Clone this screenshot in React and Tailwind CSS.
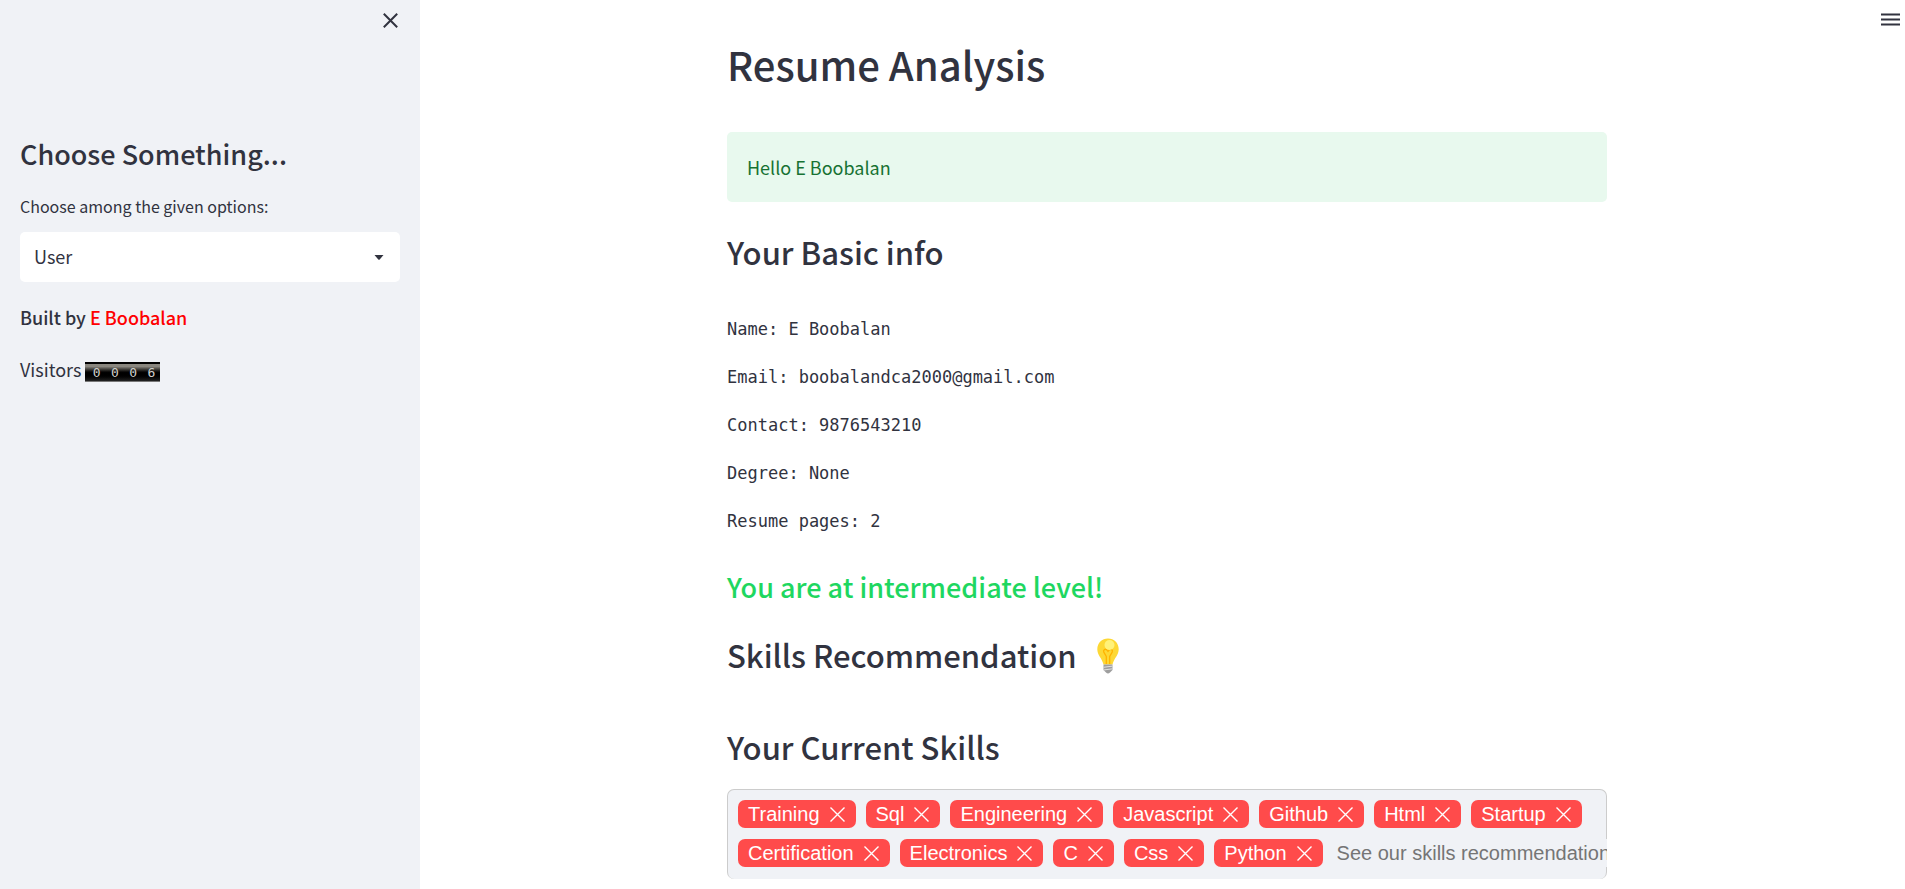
import React from "react";

const INFO = [
  "Name: E Boobalan",
  "Email: boobalandca2000@gmail.com",
  "Contact: 9876543210",
  "Degree: None",
  "Resume pages: 2",
];

const SKILLS = [
  "Training",
  "Sql",
  "Engineering",
  "Javascript",
  "Github",
  "Html",
  "Startup",
  "Certification",
  "Electronics",
  "C",
  "Css",
  "Python",
];

function BulbIcon() {
  return (
    <svg className="mt-0.5" width="22" height="36" viewBox="0 0 22 36" aria-hidden="true">
      <path
        d="M11 0.5C4.900 0.500 0.300 5 0.300 11.200c0 6 4.600 8.600 6.200 15.300h9c1.600-6.700 6.200-9.300 6.200-15.300C21.700 5 17.100 0.500 11 0.500z"
        fill="#fdd835"
      />
      <path
        d="M9.300 26V18.500L6.800 14.200c-1-2.300 1.600-4 3.200-2l1 1.300 1-1.300c1.600-2 4.200-.3 3.200 2L12.700 18.500V26"
        fill="none"
        stroke="#ffb300"
        strokeWidth="1.300"
      />
      <circle cx="12.500" cy="7" r="5" fill="#fff27a" />
      <path d="M6.500 26.500h9v5.500l-2.500 2.500a3 3 0 0 1-4 0L6.500 32z" fill="#9e9e9e" />
      <path d="M6.500 29.300l9-1.200M6.500 32l9-1.200" stroke="#e0e0e0" strokeWidth="1" />
    </svg>
  );
}

function SkillTag({ name }) {
  return (
    <li className="flex h-7 items-center gap-2.5 rounded-[7px] bg-[#ff4b4b] pr-[11px] pl-2.5 font-['Liberation_Sans',Arial,sans-serif] text-[20px] leading-7 text-white">
      {name}
      <button type="button" aria-label={`Remove ${name}`} className="block">
        <svg width="15" height="15" viewBox="0 0 15 15" fill="none" stroke="currentColor" strokeWidth="1.400">
          <path d="M0.500 0.500l14 14M14.500 0.500l-14 14" />
        </svg>
      </button>
    </li>
  );
}

function Sidebar() {
  return (
    <aside className="w-[420px] shrink-0 bg-[#f0f2f6] px-5">
      <div className="flex h-[136px] items-start justify-end pt-[13px] pr-0.5">
        <button type="button" aria-label="Close sidebar" className="block">
          <svg width="15" height="15" viewBox="0 0 15 15" fill="none" stroke="#31333f" strokeWidth="2">
            <path d="M0.800 0.800l13.400 13.400M14.200 0.800L0.800 14.200" />
          </svg>
        </button>
      </div>
      <h2 className="text-[27px] leading-9 font-medium">Choose Something...</h2>
      <label htmlFor="role" className="mt-[22px] block text-[16px] leading-6">
        Choose among the given options:
      </label>
      <div className="relative mt-3.5">
        <select
          id="role"
          className="block h-[50px] w-full appearance-none rounded-[5px] bg-white pr-10 pb-0.5 pl-3.5 text-[18px]"
        >
          <option>User</option>
        </select>
        <svg
          className="pointer-events-none absolute top-[23px] right-[16px]"
          width="10"
          height="6"
          viewBox="0 0 10 6"
          fill="#31333f"
        >
          <path d="M0.500 0h9L5.700 4.500q-.7.700-1.400 0z" />
        </svg>
      </div>
      <p className="mt-[21px] text-[18px] leading-7 font-medium">
        Built by <a href="#author" className="text-[#ff0000]">E Boobalan</a>
      </p>
      <p className="mt-6 flex items-end gap-1 text-[18px] leading-7">
        Visitors
        <span className="mb-px flex h-5 w-[75px] justify-around border-t-2 border-b border-t-black border-b-[#777] bg-linear-to-b from-[#8a877f] from-15% via-black via-55% to-[#222] pl-0.5 font-['DejaVu_Sans_Mono',monospace] text-[13px] leading-[18px] text-[#d0d0cc]">
          <span>0</span>
          <span>0</span>
          <span>0</span>
          <span>6</span>
        </span>
      </p>
    </aside>
  );
}

export default function App() {
  return (
    <div className="flex min-h-screen bg-white font-['Noto_Sans_CJK_SC','Noto_Sans',sans-serif] text-[#31333f]">
      <Sidebar />
      <main className="relative min-w-0 flex-1 pl-[9px]">
        <button type="button" aria-label="Menu" className="absolute top-[13px] right-[5px] block">
          <svg width="19" height="13" viewBox="0 0 19 13" stroke="#31333f" strokeWidth="2">
            <path d="M0 1.500h19M0 6.500h19M0 11.500h19" />
          </svg>
        </button>
        <div className="mx-auto max-w-[880px] pt-10">
          <h1 className="text-[40px] leading-12 font-medium">Resume Analysis</h1>
          <div role="alert" className="mt-11 rounded-[5px] bg-[#e8f9ee] p-5 text-[18px] leading-[30px] text-[#177233]">
            Hello E Boobalan
          </div>
          <h2 className="mt-[30px] text-[31px] leading-10 font-medium">Your Basic info</h2>
          <div className="mt-[43px] flex flex-col gap-5 font-['DejaVu_Sans_Mono',monospace] text-[17px] leading-7">
            {INFO.map((line) => (
              <p key={line}>{line}</p>
            ))}
          </div>
          <h3 className="mt-[34px] text-[27px] leading-9 font-medium text-[#1ed760]">
            You are at intermediate level!
          </h3>
          <h2 className="mt-[30px] flex items-center gap-5 text-[31px] leading-10 font-medium">
            Skills Recommendation
            <BulbIcon />
          </h2>
          <h2 className="mt-[52px] text-[31px] leading-10 font-medium">Your Current Skills</h2>
          <div className="mt-[22px] rounded-[7px] border border-b-0 border-[#ccc] bg-[#f0f2f6] pt-2.5 pb-3 pl-2.5">
            <ul className="flex flex-wrap gap-x-2.5 gap-y-[11px]">
              {SKILLS.map((name) => (
                <SkillTag key={name} name={name} />
              ))}
              <li className="-mr-px h-7 min-w-40 flex-1 basis-40">
                <input
                  type="text"
                  aria-label="Add a skill"
                  placeholder="See our skills recommendation generated from System"
                  className="block h-7 w-full bg-[#f0f2f6] pl-1 font-['Liberation_Sans',Arial,sans-serif] text-[20px] placeholder:text-[#757575]"
                />
              </li>
            </ul>
          </div>
        </div>
      </main>
    </div>
  );
}
